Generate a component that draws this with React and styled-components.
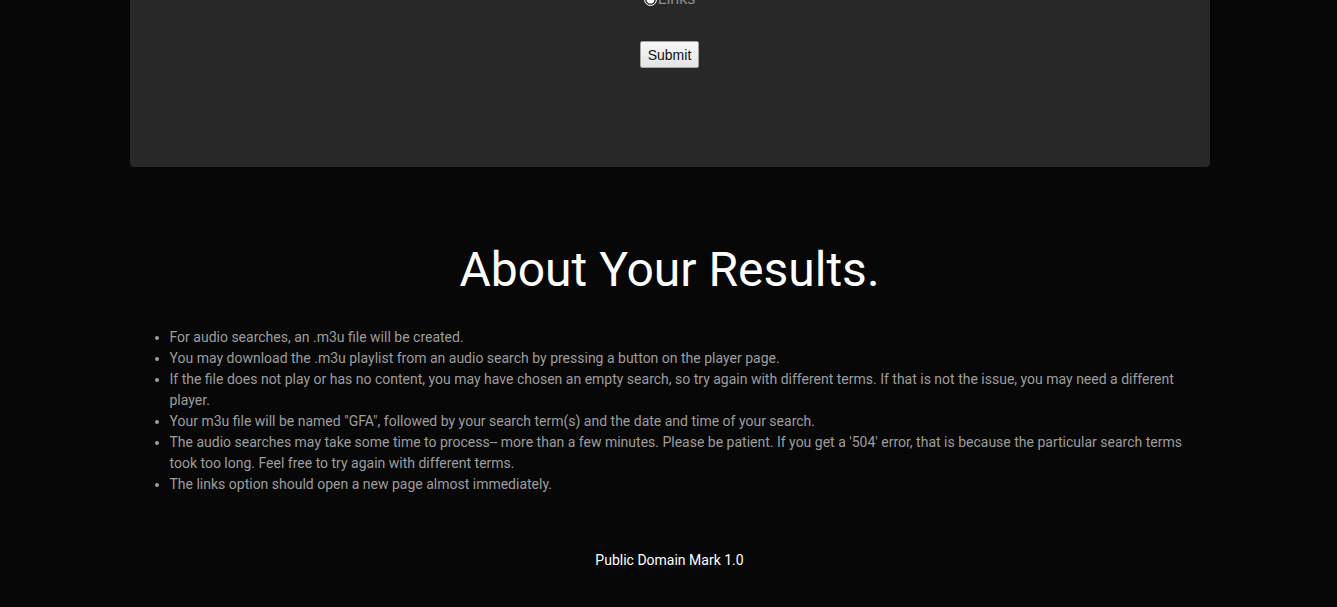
import React from "react";
import styled, { createGlobalStyle } from "styled-components";

const Global = createGlobalStyle`
  html, body {
    margin: 0;
    padding: 0;
    background: #070707;
    overflow: hidden;
  }
  body {
    font-family: Roboto, "Liberation Sans", Arial, sans-serif;
  }
`;

const Page = styled.div`
  width: 1080px;
  margin: 0 auto;
  padding-left: 2px;
`;

const Panel = styled.section`
  background: #282828;
  padding: 0 0 99px;
  border-radius: 0 0 4px 4px;
  display: flex;
  flex-direction: column;
  align-items: center;
`;

const RadioRow = styled.label`
  display: flex;
  align-items: center;
  justify-content: center;
  height: 16px;
  margin-top: -9px;
  font-family: "Liberation Sans", Arial, sans-serif;
  font-size: 16px;
  line-height: 16px;
  color: #8d8d8d;
`;

const Radio = styled.input`
  width: 13px;
  height: 13px;
  margin: 0 1px 0 0;
  accent-color: #ffffff;
`;

const SubmitButton = styled.button`
  margin-top: 34px;
  height: 27px;
  padding: 0 7px;
  font-family: "Liberation Sans", Arial, sans-serif;
  font-size: 14px;
  color: #111;
  background: linear-gradient(#f7f7f7, #e4e4e4);
  border: 1px solid #a3a3a3;
  border-radius: 2px;
`;

const Heading = styled.h1`
  margin: 74px 0 0;
  text-align: center;
  font-family: Roboto, sans-serif;
  font-weight: 400;
  font-size: 48px;
  line-height: 57.6px;
  color: #ffffff;
`;

const Notes = styled.ul`
  margin: 28px 0 0;
  padding-left: 40px;
  font-family: Roboto, sans-serif;
  font-size: 14px;
  line-height: 21px;
  color: #9d9d9d;
`;

const Note = styled.li``;

const Footer = styled.footer`
  margin-top: 55px;
  text-align: center;
  font-family: Roboto, sans-serif;
  font-size: 14px;
  line-height: 21px;
  color: #ffffff;
`;

const notes = [
  "For audio searches, an .m3u file will be created.",
  "You may download the .m3u playlist from an audio search by pressing a button on the player page.",
  "If the file does not play or has no content, you may have chosen an empty search, so try again with different terms. If that is not the issue, you may need a different player.",
  'Your m3u file will be named "GFA", followed by your search term(s) and the date and time of your search.',
  "The audio searches may take some time to process-- more than a few minutes. Please be patient. If you get a '504' error, that is because the particular search terms took too long. Feel free to try again with different terms.",
  "The links option should open a new page almost immediately.",
];

export default function App() {
  return (
    <>
      <Global />
      <Page>
        <Panel>
          <RadioRow>
            <Radio type="radio" name="kind" defaultChecked />
            Links
          </RadioRow>
          <SubmitButton type="button">Submit</SubmitButton>
        </Panel>
        <Heading>About Your Results.</Heading>
        <Notes>
          {notes.map((n, i) => (
            <Note key={i}>{n}</Note>
          ))}
        </Notes>
        <Footer>Public Domain Mark 1.0</Footer>
      </Page>
    </>
  );
}
